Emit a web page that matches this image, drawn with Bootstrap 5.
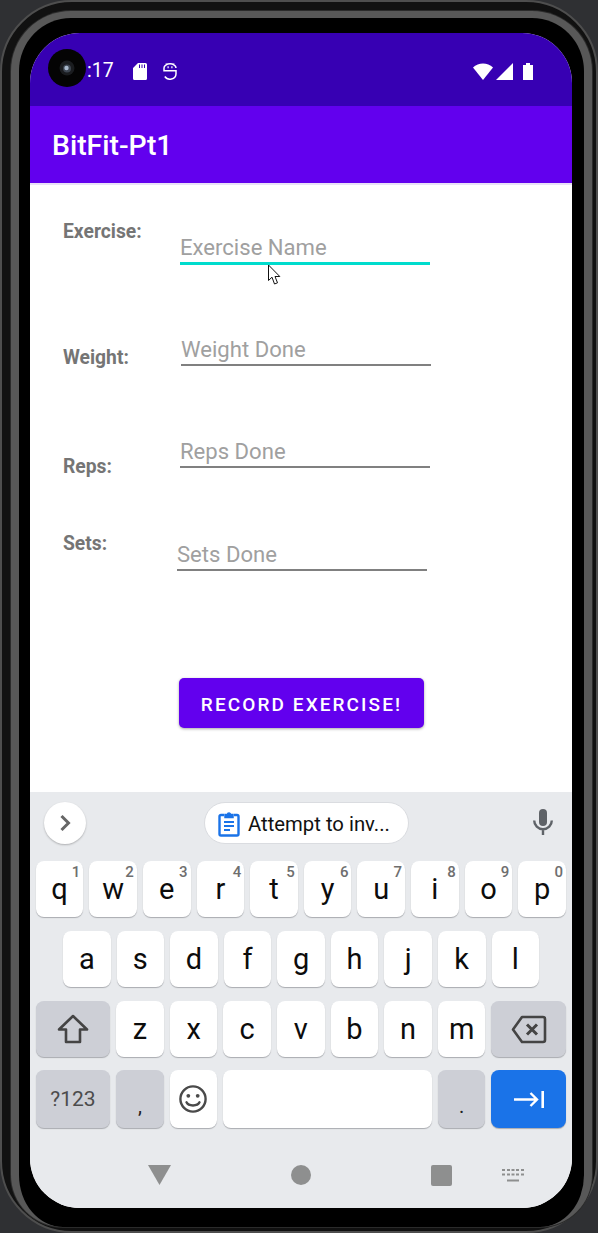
<!DOCTYPE html>
<html lang="en">
<head>
    <meta charset="UTF-8">
    <meta name="viewport" content="width=device-width, initial-scale=1.0">
    <title>BitFit-Pt1</title>
    <link href="https://cdn.jsdelivr.net/npm/bootstrap@5.3.0/dist/css/bootstrap.min.css" rel="stylesheet">
    <script src="https://cdn.jsdelivr.net/npm/bootstrap@5.3.0/dist/js/bootstrap.bundle.min.js"></script>
    <style>
        body {
            margin: 0;
            background-color: #2f3033;
            font-family: Roboto, "Liberation Sans", sans-serif;
            overflow: hidden;
        }
        /* phone frame rings */
        .shell-outer {
            height: 1233px;
            border: 2px solid #4e4e4e;
            border-radius: 72px;
            padding: 9px 4px 4px 9px;
            background-color: #111;
        }
        .shell-inner {
            height: 100%;
            border: solid #585858;
            border-width: 7px 8px 0 8px;
            border-radius: 60px 60px 52px 52px;
            padding: 15px 12px 19px 11px;
            background-color: #000;
            box-shadow: 0 0 0 1px #2b2b2b;
        }
        .screen {
            width: 542px;
            height: 1175px;
            border-radius: 50px;
            overflow: hidden;
            background-color: #fff;
        }
        .status-strip {
            height: 73px;
            padding: 3px 39px 0 46px;
            background-color: #3700b3;
            color: #fff;
            font-size: 19.5px;
        }
        .time-text { width: 57px; }
        .title-strip {
            height: 79px;
            padding: 4px 22px 0;
            background-color: #6200ee;
            border-bottom: 2px solid #e9e0f8;
            color: #fff;
            font-size: 28.4px;
            font-weight: 500;
        }
        .camera-dot {
            position: absolute;
            left: 48px;
            top: 49px;
            width: 38px;
            height: 38px;
            border-radius: 50%;
            background-color: #040404;
        }
        .mouse-arrow {
            position: absolute;
            left: 267px;
            top: 264px;
        }
        .form-area {
            height: 607px;
            padding-left: 33px;
        }
        .entry-row { position: relative; }
        .entry-a { margin-top: 35px; height: 45px; }
        .entry-b { margin-top: 65px; height: 36px; }
        .entry-c { margin-top: 66px; height: 36px; }
        .entry-d { margin-top: 63px; height: 40px; }
        .entry-label {
            width: 117px;
            margin: 0;
            color: #757575;
            font-size: 19.3px;
            line-height: 22px;
            font-weight: 700;
        }
        .entry-a .entry-label { margin-top: 1px; }
        .entry-b .entry-label { margin-top: 17px; }
        .entry-c .entry-label { margin-top: 24px; }
        .entry-d .entry-label { margin-top: 2px; }
        .entry-input {
            width: 250px;
            height: 36px;
            padding: 3px 0 0 0;
            border: 0;
            border-bottom: 2px solid #808080;
            border-radius: 0;
            background: transparent;
            font-size: 22.1px;
            line-height: 28px;
        }
        .entry-input::placeholder { color: #a0a0a0; opacity: 1; }
        .entry-a .entry-input { margin-top: 9px; border-bottom: 3px solid #00dccd; }
        .entry-b .entry-input { margin-left: 1px; }
        .entry-d .entry-input { margin-top: 4px; margin-left: -3px; }
        .record-btn {
            width: 245px;
            height: 50px;
            margin: 107px 0 0 116px;
            border: 0;
            border-radius: 5px;
            background-color: #6200ee;
            box-shadow: 0 1px 3px rgba(0, 0, 0, .35);
            color: #fff;
            font-size: 19px;
            font-weight: 500;
            letter-spacing: 2.1px;
        }
        .record-btn:hover { background-color: #6200ee; color: #fff; }
        .keyboard {
            height: 416px;
            background-color: #e8eaed;
        }
        .suggest-strip {
            height: 69px;
            padding: 10px 19px 0 14px;
        }
        .round-btn {
            width: 42px;
            height: 42px;
            border-radius: 50%;
            background-color: #fff;
            box-shadow: 0 1px 2px rgba(0, 0, 0, .25);
        }
        .chip {
            width: 205px;
            height: 42px;
            margin-left: 118px;
            padding: 2px 0 0 13px;
            border: 1px solid #dadce0;
            border-radius: 21px;
            background-color: #fff;
            font-size: 20.3px;
            color: #111;
            white-space: nowrap;
        }
        .mic-icon { margin-top: 7px; }
        .kb-row {
            height: 56px;
            gap: 6px;
            padding: 0 6px 0 5.6px;
            margin-bottom: 14px;
        }
        .kb-row-mid { padding-left: 33px; padding-right: 33px; }
        .kb-row-low { height: 58px; margin-top: -1px; margin-bottom: 0; }
        .kb-key {
            flex: 1 1 0;
            position: relative;
            border-radius: 8px;
            background-color: #fff;
            box-shadow: 0 1px 1px #a9abb0;
            font-size: 29px;
            line-height: 1;
            color: #0c0c0c;
        }
        .kb-fn { background-color: #cdcfd6; color: #4c4c4c; }
        .kb-wide { flex: 0 0 74.6px; }
        .kb-space { flex: 0 0 209px; }
        .kb-go { background-color: #1a73e8; }
        .kb-num { font-size: 21px; }
        .kb-punct { padding-top: 14px; font-size: 20px; color: #222; }
        .kb-hint {
            position: absolute;
            top: 4px;
            right: 3px;
            font-size: 15px;
            font-weight: 500;
            line-height: 1;
            color: #6e6e6e;
        }
        .nav-strip {
            height: 80px;
            padding: 14px 0 0 118px;
        }
        .nav-circle {
            width: 20px;
            height: 20px;
            margin-left: 120px;
            border-radius: 50%;
            background-color: #8e8f8f;
        }
        .nav-square {
            width: 21px;
            height: 21px;
            margin-left: 120px;
            border-radius: 2px;
            background-color: #8e8f8f;
        }
        .nav-keys { margin-left: 50px; }
    </style>
</head>
<body>
    <div class="shell-outer">
        <div class="shell-inner">
            <div class="screen d-flex flex-column">
                <div class="status-strip d-flex align-items-center">
                    <span class="time-text">1:17</span>
                    <svg width="14" height="17" viewBox="0 0 14 17"><path fill="#fff" d="M5 0H12.5A1.5 1.5 0 0 1 14 1.5V15.5A1.5 1.5 0 0 1 12.5 17H1.5A1.5 1.5 0 0 1 0 15.5V5Z"/><path stroke="#3700b3" stroke-width="1" d="M6.5 1.5V5M9 1.5V5M11.5 1.5V5"/></svg>
                    <svg class="ms-3" width="14" height="17" viewBox="0 0 14 17" fill="none" stroke="#fff" stroke-width="1.5"><path d="M13 5A6 4.200 0 0 0 1 5V7.800H13V11A6 5.300 0 0 1 1.800 13.500"/><path stroke-width="2" d="M4.500 4.300H5.700M8.300 4.300H9.500"/><path stroke-width="1" d="M3 .3L4 1.500M11 .3L10 1.500"/></svg>
                    <svg class="ms-auto" width="20" height="17" viewBox="0 0 20 17"><path fill="#fff" d="M10 17L0 4.500C5.500 -1 14.500 -1 20 4.500Z"/></svg>
                    <svg style="margin-left:3px" width="17" height="17" viewBox="0 0 17 17"><path fill="#fff" d="M17 0V17H0Z"/></svg>
                    <svg style="margin-left:10px" width="10" height="17" viewBox="0 0 10 17"><path fill="#fff" d="M3 0H7V2H10V17H0V2H3Z"/></svg>
                </div>
                <div class="title-strip d-flex align-items-center">BitFit-Pt1</div>
                <form class="form-area">
                    <div class="entry-row entry-a d-flex align-items-start">
                        <label class="entry-label" for="exName">Exercise:</label>
                        <input id="exName" class="form-control entry-input shadow-none" placeholder="Exercise Name">
                    </div>
                    <div class="entry-row entry-b d-flex align-items-start">
                        <label class="entry-label" for="exWeight">Weight:</label>
                        <input id="exWeight" class="form-control entry-input shadow-none" placeholder="Weight Done">
                    </div>
                    <div class="entry-row entry-c d-flex align-items-start">
                        <label class="entry-label" for="exReps">Reps:</label>
                        <input id="exReps" class="form-control entry-input shadow-none" placeholder="Reps Done">
                    </div>
                    <div class="entry-row entry-d d-flex align-items-start">
                        <label class="entry-label" for="exSets">Sets:</label>
                        <input id="exSets" class="form-control entry-input shadow-none" placeholder="Sets Done">
                    </div>
                    <button type="button" class="btn record-btn d-block pt-1 pb-0 px-0">RECORD EXERCISE!</button>
                </form>
                <div class="keyboard">
                    <div class="suggest-strip d-flex align-items-start">
                        <div class="round-btn d-flex align-items-center justify-content-center">
                            <svg width="12" height="18" viewBox="0 0 12 18" fill="none" stroke="#666" stroke-width="3"><path d="M2.500 2L9.500 9L2.500 16"/></svg>
                        </div>
                        <div class="chip d-flex align-items-center">
                            <svg class="me-2" width="22" height="26" viewBox="0 0 22 26" fill="none" stroke="#1a73e8" stroke-width="2.400"><path d="M6 4H3A1.500 1.500 0 0 0 1.500 5.500V23A1.500 1.500 0 0 0 3 24.500H19A1.500 1.500 0 0 0 20.500 23V5.500A1.500 1.500 0 0 0 19 4H16"/><path fill="#1a73e8" stroke-width="1.500" d="M7 6.500V3.500H9.500A1.500 1.500 0 0 1 12.500 3.500H15V6.500Z"/><path stroke-width="2" d="M6 11H16M6 15H16M6 19H12"/></svg>
                            <span>Attempt to inv...</span>
                        </div>
                        <svg class="ms-auto mic-icon" width="20" height="26" viewBox="0 0 20 26" fill="none"><rect x="6" y="0" width="8" height="17" rx="4" fill="#5f6368"/><path stroke="#5f6368" stroke-width="2.400" d="M1.200 11.500A8.800 8.800 0 0 0 18.800 11.500M10 20V26"/></svg>
                    </div>

                    <div class="kb-row d-flex">
                        <div class="kb-key d-flex align-items-center justify-content-center">q<span class="kb-hint">1</span></div>
                        <div class="kb-key d-flex align-items-center justify-content-center">w<span class="kb-hint">2</span></div>
                        <div class="kb-key d-flex align-items-center justify-content-center">e<span class="kb-hint">3</span></div>
                        <div class="kb-key d-flex align-items-center justify-content-center">r<span class="kb-hint">4</span></div>
                        <div class="kb-key d-flex align-items-center justify-content-center">t<span class="kb-hint">5</span></div>
                        <div class="kb-key d-flex align-items-center justify-content-center">y<span class="kb-hint">6</span></div>
                        <div class="kb-key d-flex align-items-center justify-content-center">u<span class="kb-hint">7</span></div>
                        <div class="kb-key d-flex align-items-center justify-content-center">i<span class="kb-hint">8</span></div>
                        <div class="kb-key d-flex align-items-center justify-content-center">o<span class="kb-hint">9</span></div>
                        <div class="kb-key d-flex align-items-center justify-content-center">p<span class="kb-hint">0</span></div>
                    </div>
                    <div class="kb-row kb-row-mid d-flex">
                        <div class="kb-key d-flex align-items-center justify-content-center">a</div>
                        <div class="kb-key d-flex align-items-center justify-content-center">s</div>
                        <div class="kb-key d-flex align-items-center justify-content-center">d</div>
                        <div class="kb-key d-flex align-items-center justify-content-center">f</div>
                        <div class="kb-key d-flex align-items-center justify-content-center">g</div>
                        <div class="kb-key d-flex align-items-center justify-content-center">h</div>
                        <div class="kb-key d-flex align-items-center justify-content-center">j</div>
                        <div class="kb-key d-flex align-items-center justify-content-center">k</div>
                        <div class="kb-key d-flex align-items-center justify-content-center">l</div>
                    </div>
                    <div class="kb-row d-flex">
                        <div class="kb-key kb-fn kb-wide d-flex align-items-center justify-content-center">
                            <svg width="32" height="30" viewBox="0 0 32 30" fill="none" stroke="#444" stroke-width="2.600" stroke-linejoin="round"><path d="M16 2L30 15.500H23V28H9V15.500H2Z"/></svg>
                        </div>
                        <div class="kb-key d-flex align-items-center justify-content-center">z</div>
                        <div class="kb-key d-flex align-items-center justify-content-center">x</div>
                        <div class="kb-key d-flex align-items-center justify-content-center">c</div>
                        <div class="kb-key d-flex align-items-center justify-content-center">v</div>
                        <div class="kb-key d-flex align-items-center justify-content-center">b</div>
                        <div class="kb-key d-flex align-items-center justify-content-center">n</div>
                        <div class="kb-key d-flex align-items-center justify-content-center">m</div>
                        <div class="kb-key kb-fn kb-wide d-flex align-items-center justify-content-center">
                            <svg width="36" height="29" viewBox="0 0 36 29" fill="none" stroke="#444" stroke-width="2.600" stroke-linejoin="round"><path d="M11 2H32A2 2 0 0 1 34 4V25A2 2 0 0 1 32 27H11L2 14.500Z"/><path stroke-width="3" d="M16 9.500L26 19.500M26 9.500L16 19.500"/></svg>
                        </div>
                    </div>
                    <div class="kb-row kb-row-low d-flex">
                        <div class="kb-key kb-fn kb-wide kb-num d-flex align-items-center justify-content-center">?123</div>
                        <div class="kb-key kb-fn kb-punct d-flex align-items-center justify-content-center">,</div>
                        <div class="kb-key d-flex align-items-center justify-content-center">
                            <svg width="28" height="28" viewBox="0 0 28 28" fill="none" stroke="#4a4a4a" stroke-width="2.400"><circle cx="14" cy="14" r="12.600"/><circle cx="9.300" cy="10.800" r="1.900" fill="#4a4a4a" stroke="none"/><circle cx="18.700" cy="10.800" r="1.900" fill="#4a4a4a" stroke="none"/><path stroke-linecap="round" d="M7.500 17.300C9.500 21.500 18.500 21.500 20.500 17.300"/></svg>
                        </div>
                        <div class="kb-key kb-space"></div>
                        <div class="kb-key kb-fn kb-punct d-flex align-items-center justify-content-center">.</div>
                        <div class="kb-key kb-go kb-wide d-flex align-items-center justify-content-center">
                            <svg width="30" height="17" viewBox="0 0 30 17" fill="none" stroke="#fff" stroke-width="2.400"><path d="M0 8.500H23M16.500 2L23 8.500L16.500 15"/><path stroke-width="2.600" d="M28.700 0V17"/></svg>
                        </div>
                    </div>

                    <div class="nav-strip d-flex align-items-center">
                        <svg width="23" height="20" viewBox="0 0 23 20"><path fill="#8e8f8f" d="M0 0H23L11.500 20Z"/></svg>
                        <div class="nav-circle"></div>
                        <div class="nav-square"></div>
                        <svg class="nav-keys" width="22" height="13" viewBox="0 0 22 13" fill="#8e8f8f"><path d="M0 0h3v2H0zM5 0h3v2H5zM9.500 0h3v2h-3zM14 0h3v2h-3zM19 0h3v2h-3zM0 4.500h3v2H0zM5 4.500h3v2H5zM9.500 4.500h3v2h-3zM14 4.500h3v2h-3zM19 4.500h3v2h-3zM5 10.500h12v2H5z"/></svg>
                    </div>
                </div>
            </div>
        </div>
    </div>

    <!-- overlays: camera hole and emulator mouse pointer -->
    <div class="camera-dot d-flex align-items-center justify-content-center">
        <svg width="16" height="16" viewBox="0 0 16 16"><circle cx="8" cy="8" r="7.500" fill="#1a1c1f"/><circle cx="8" cy="8.500" r="4" fill="#3d4550"/><circle cx="7.500" cy="8" r="2.200" fill="#a8b8cc"/></svg>
    </div>
    <svg class="mouse-arrow" width="14" height="22" viewBox="0 0 14 22"><path fill="#fff" stroke="#111" stroke-width="1" d="M1.500 1V16.500L5 13.200L7.500 20L10.500 18.800L8 12.500H12.800Z"/></svg>
</body>
</html>
